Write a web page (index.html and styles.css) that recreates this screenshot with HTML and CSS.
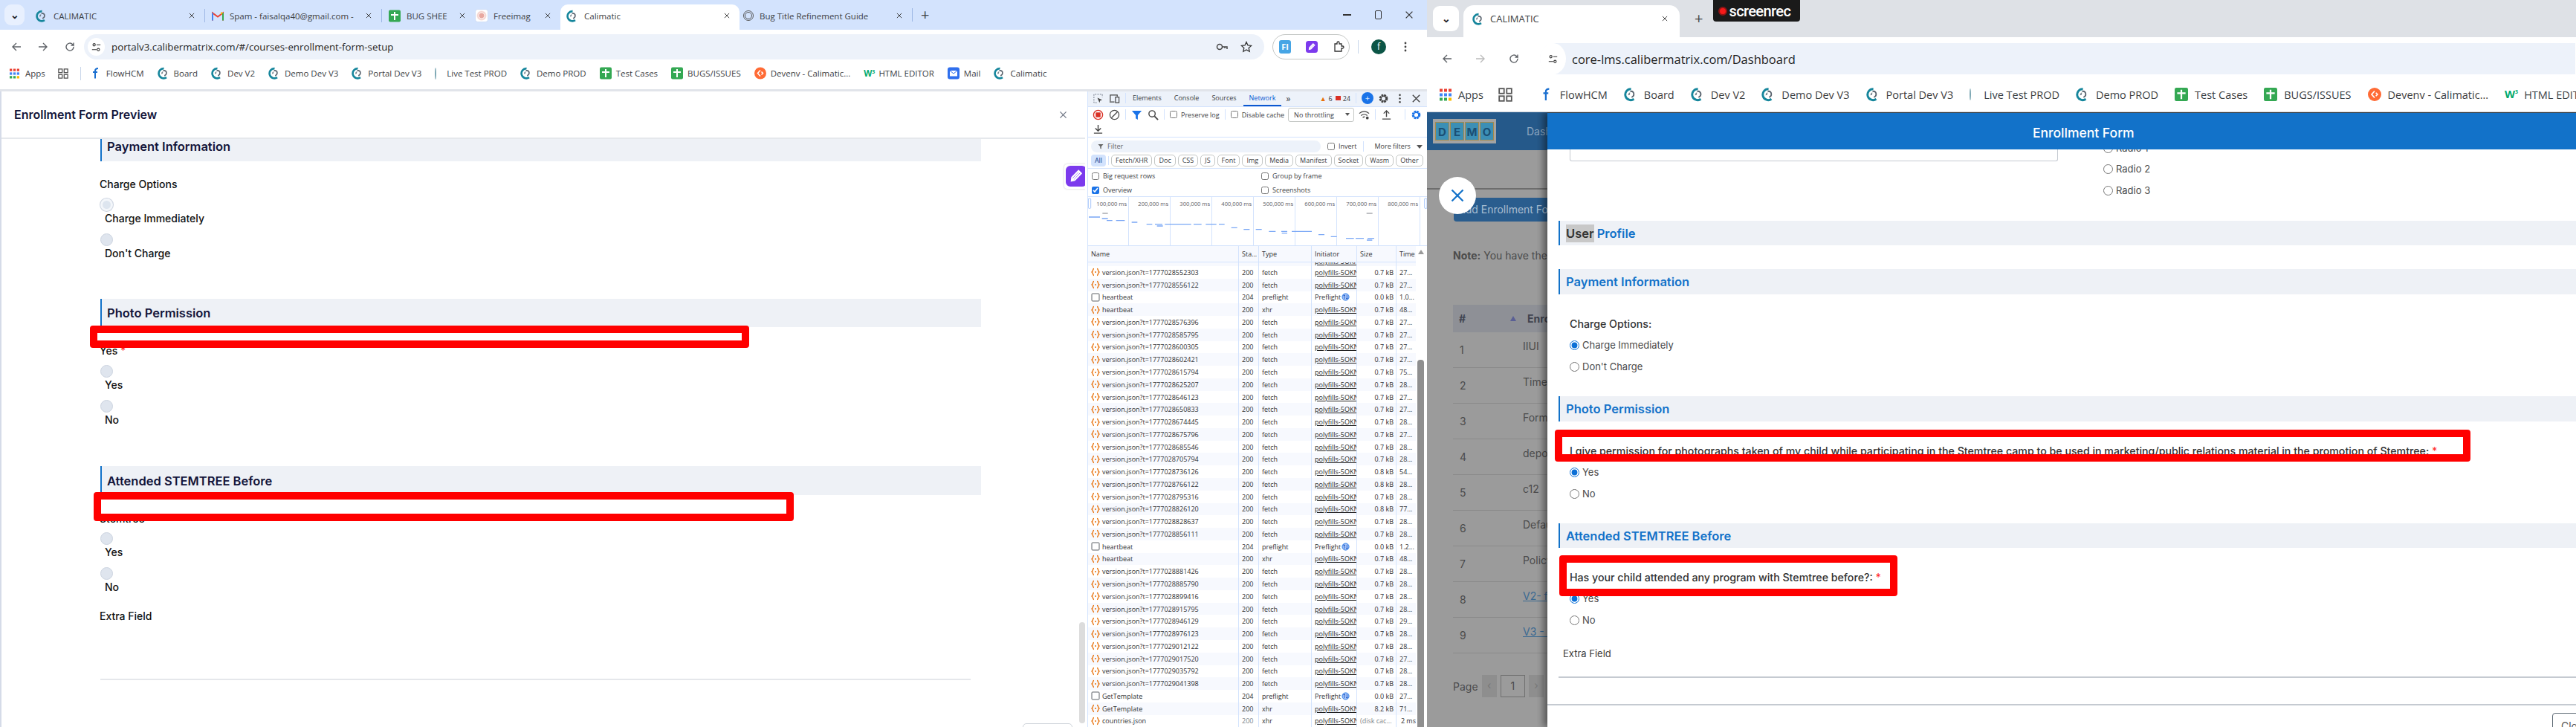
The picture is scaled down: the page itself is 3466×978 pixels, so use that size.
FILE: index.html
```html
<!DOCTYPE html>
<html lang="en">
<head>
    <meta charset="utf-8">
    <title>Enrollment form bug</title>
    <link rel="stylesheet" href="styles.css">
</head>
<body>
<svg class="defs" width="0" height="0">
    <symbol id="cal" viewBox="0 0 16 16"><path d="M8.5 1.6A6.6 6.6 0 1 0 12 13.6" fill="none" stroke="#16869c" stroke-width="2.6"/><path d="M7.6 4.4c2.8-.6 4.8 1.4 4.2 4.2-.3 1.4-1.3 2.4-2.6 2.8" fill="none" stroke="#59636e" stroke-width="1.7"/><path d="M5 9c0-2 1-3 2.4-3.4L7 8.6z" fill="#7b8791"/></symbol>
    <symbol id="sheet" viewBox="0 0 16 16"><rect width="16" height="16" rx="2" fill="#34a853"/><path d="M8 2.5v11M3 6.5h10" stroke="#fff" stroke-width="2"/></symbol>
    <symbol id="gmail" viewBox="0 0 16 14"><path d="M1 13V3l7 5 7-5v10" fill="none" stroke="#ea4335" stroke-width="2"/><path d="M1 13V3" stroke="#4285f4" stroke-width="2"/><path d="M15 13V3" stroke="#34a853" stroke-width="2"/><path d="M15 3l-3 2.2V1.6z" fill="#fbbc04"/></symbol>
    <symbol id="back" viewBox="0 0 16 16"><path d="M14 8H3M8 3L3 8l5 5" fill="none" stroke="currentColor" stroke-width="1.4"/></symbol>
    <symbol id="fwd" viewBox="0 0 16 16"><path d="M2 8h11M8 3l5 5-5 5" fill="none" stroke="currentColor" stroke-width="1.4"/></symbol>
    <symbol id="reload" viewBox="0 0 16 16"><path d="M13 8a5 5 0 1 1-1.5-3.5L13 6V2.5M13 6H9.5" fill="none" stroke="currentColor" stroke-width="1.4"/></symbol>
    <symbol id="tune" viewBox="0 0 16 16"><circle cx="4.5" cy="4" r="2" fill="none" stroke="#333" stroke-width="1.3"/><circle cx="11.5" cy="12" r="2" fill="none" stroke="#333" stroke-width="1.3"/><path d="M8.5 4H15M1 12h7.500" stroke="#333" stroke-width="1.3"/></symbol>
    <symbol id="close" viewBox="0 0 16 16"><path d="M3 3l10 10M13 3L3 13" fill="none" stroke="currentColor" stroke-width="1.5"/></symbol>
    <symbol id="grid" viewBox="0 0 16 16"><g fill="#ea4335"><rect width="4" height="4"/><rect x="6" width="4" height="4"/><rect x="12" width="4" height="4"/></g><g fill="#4285f4"><rect y="6" width="4" height="4"/><rect x="6" y="6" width="4" height="4"/><rect x="12" y="6" width="4" height="4"/></g><g fill="#34a853"><rect y="12" width="4" height="4"/><rect x="6" y="12" width="4" height="4"/></g><rect x="12" y="12" width="4" height="4" fill="#fbbc04"/></symbol>
    <symbol id="tabs" viewBox="0 0 16 16"><g fill="none" stroke="#555" stroke-width="1.5"><rect x="1" y="1" width="5.5" height="5.5"/><rect x="9.5" y="1" width="5.5" height="5.5"/><rect x="1" y="9.5" width="5.5" height="5.5"/><rect x="9.5" y="9.5" width="5.5" height="5.5"/></g></symbol>
    <symbol id="flow" viewBox="0 0 16 16"><path d="M11 1.5C8 1.500 7 3 7 5v10M4 6.5h6" fill="none" stroke="#1a6fd0" stroke-width="2"/></symbol>
    <symbol id="deven" viewBox="0 0 16 16"><circle cx="8" cy="8" r="8" fill="#ff6b35"/><path d="M8 4L4.5 8 8 12M9.500 6l2 2-2 2" fill="none" stroke="#fff" stroke-width="1.5"/></symbol>
    <symbol id="mail" viewBox="0 0 16 16"><rect width="16" height="16" rx="3" fill="#2f6fed"/><rect x="3" y="4.5" width="10" height="7.5" fill="#fff"/><path d="M3 4.5l5 4 5-4" fill="none" stroke="#2f6fed"/></symbol>
    <symbol id="pen" viewBox="0 0 16 16"><rect width="16" height="16" rx="3.5" fill="#7c3aed"/><path d="M4.5 11.5L11 4.500M4.500 11.500l.3-2.500 5-5.200 2 2-5 5.200z" fill="none" stroke="#fff" stroke-width="1.2"/></symbol>
    <symbol id="puzzle" viewBox="0 0 16 16"><path d="M3 4h3V2.500a1.500 1.500 0 0 1 3 0V4h3v3h1.500a1.500 1.500 0 0 1 0 3H12v4H3z" fill="none" stroke="#333" stroke-width="1.3"/></symbol>
    <symbol id="key" viewBox="0 0 16 16"><circle cx="5" cy="8" r="3.5" fill="none" stroke="#444" stroke-width="1.5"/><path d="M8.5 8H15v3M12 8v2" fill="none" stroke="#444" stroke-width="1.5"/></symbol>
    <symbol id="star" viewBox="0 0 16 16"><path d="M8 1.500l2 4.400 4.700.5-3.500 3.200 1 4.700L8 11.900l-4.200 2.400 1-4.700L1.300 6.400 6 5.900z" fill="none" stroke="#333" stroke-width="1.3"/></symbol>
    <symbol id="json" viewBox="0 0 12 12"><path d="M4 1.500C2 1.500 3 5 1 6c2 1 1 4.500 3 4.500M8 1.500c2 0 1 3.500 3 4.500-2 1-1 4.500-3 4.500" fill="none" stroke="#e8710a" stroke-width="1.3"/><circle cx="6" cy="6" r="1" fill="#e8710a"/></symbol>
    <symbol id="box" viewBox="0 0 12 12"><rect x="1" y="1" width="10" height="10" rx="1" fill="none" stroke="#5f6368" stroke-width="1"/></symbol>
    <symbol id="flight" viewBox="0 0 12 12"><circle cx="6" cy="6" r="5" fill="#a8c7fa" stroke="#1a73e8"/><path d="M4 9V3M2.500 4.500L4 3l1.500 1.500M8 3v6M6.500 7.500L8 9l1.500-1.500" fill="none" stroke="#1a56c4"/></symbol>
    <symbol id="inspect" viewBox="0 0 16 16"><path d="M6 14H2V2h12v4" fill="none" stroke="#6b7280" stroke-dasharray="2 1.5"/><path d="M7 7l7 3-3 1-1 3z" fill="#444"/></symbol>
    <symbol id="device" viewBox="0 0 16 16"><path d="M2 12V3h10v2M1 13h7" fill="none" stroke="#444" stroke-width="1.3"/><rect x="9.5" y="6" width="5" height="8" fill="none" stroke="#444" stroke-width="1.3"/></symbol>
    <symbol id="gear" viewBox="0 0 16 16"><circle cx="8" cy="8" r="4.8" fill="none" stroke="currentColor" stroke-width="2.8" stroke-dasharray="2.8 1"/><circle cx="8" cy="8" r="3.5" fill="none" stroke="currentColor" stroke-width="1.4"/></symbol>
    <symbol id="dots" viewBox="0 0 16 16"><g fill="currentColor"><circle cx="8" cy="3" r="1.4"/><circle cx="8" cy="8" r="1.4"/><circle cx="8" cy="13" r="1.4"/></g></symbol>
    <symbol id="record" viewBox="0 0 16 16"><circle cx="8" cy="8" r="6.5" fill="none" stroke="#d93025" stroke-width="1.5"/><rect x="4.5" y="4.5" width="7" height="7" rx="1" fill="#d93025"/></symbol>
    <symbol id="clear" viewBox="0 0 16 16"><circle cx="8" cy="8" r="6.5" fill="none" stroke="#444" stroke-width="1.3"/><path d="M3.500 12.500l9-9" stroke="#444" stroke-width="1.3"/></symbol>
    <symbol id="funnel" viewBox="0 0 16 16"><path d="M1 2h14L9.500 8.500V15l-3-2V8.500z" fill="currentColor"/></symbol>
    <symbol id="search" viewBox="0 0 16 16"><circle cx="6.5" cy="6.5" r="4.5" fill="none" stroke="#444" stroke-width="1.5"/><path d="M10 10l5 5" stroke="#444" stroke-width="2"/></symbol>
    <symbol id="wifi" viewBox="0 0 16 16"><path d="M1 6a10 10 0 0 1 14 0M3.500 9a6.500 6.500 0 0 1 9 0M6 12a3 3 0 0 1 3-1" fill="none" stroke="#444" stroke-width="1.3"/><circle cx="12.5" cy="12.5" r="2" fill="#444"/></symbol>
    <symbol id="up" viewBox="0 0 16 16"><path d="M8 11V2M4 6l4-4 4 4M2 14h12" fill="none" stroke="#444" stroke-width="1.5"/></symbol>
    <symbol id="down" viewBox="0 0 16 16"><path d="M8 2v9M4 7l4 4 4-4M2 14h12" fill="none" stroke="#444" stroke-width="1.5"/></symbol>
</svg>

<div class="desktop">

<!-- left browser window -->
<section class="win win-a">
    <div class="strip">
        <div class="tab-menu">&#8964;</div>
        <div class="tab w-cal"><svg class="fav"><use href="#cal"/></svg><span class="tab-title">CALIMATIC</span><svg class="tab-x"><use href="#close"/></svg></div>
        <div class="tab w-mail sep-l"><svg class="fav"><use href="#gmail"/></svg><span class="tab-title">Spam - faisalqa40@gmail.com -</span><svg class="tab-x"><use href="#close"/></svg></div>
        <div class="tab w-bug sep-l"><svg class="fav"><use href="#sheet"/></svg><span class="tab-title">BUG SHEE</span><svg class="tab-x"><use href="#close"/></svg></div>
        <div class="tab w-free"><span class="fav-free"></span><span class="tab-title">Freeimag</span><svg class="tab-x"><use href="#close"/></svg></div>
        <div class="tab w-active"><svg class="fav"><use href="#cal"/></svg><span class="tab-title">Calimatic</span><svg class="tab-x"><use href="#close"/></svg></div>
        <div class="tab w-guide"><span class="fav-gpt"></span><span class="tab-title">Bug Title Refinement Guide</span><svg class="tab-x"><use href="#close"/></svg></div>
        <span class="tab-sep"></span>
        <span class="tab-plus">+</span>
        <div class="win-ctrl">
            <span class="min"></span>
            <span class="max"></span>
            <svg class="win-x"><use href="#close"/></svg>
        </div>
    </div>
    <div class="toolbar">
        <svg class="nav-ic"><use href="#back"/></svg>
        <svg class="nav-ic"><use href="#fwd"/></svg>
        <svg class="nav-ic"><use href="#reload"/></svg>
        <div class="omni">
            <span class="site"><svg><use href="#tune"/></svg></span>
            <span class="url">portalv3.calibermatrix.com/#/courses-enrollment-form-setup</span>
            <svg class="omni-ic key"><use href="#key"/></svg>
            <svg class="omni-ic"><use href="#star"/></svg>
        </div>
        <div class="ext-pill">
            <span class="ext-fi">FI</span>
            <svg class="ext"><use href="#pen"/></svg>
            <svg class="ext"><use href="#puzzle"/></svg>
        </div>
        <span class="bar-sep"></span>
        <span class="avatar">f</span>
        <svg class="menu-dots"><use href="#dots"/></svg>
    </div>
    <div class="bookmarks">
        <a class="bm bm-apps"><svg class="grid"><use href="#grid"/></svg>Apps</a>
        <svg class="bm-tabs"><use href="#tabs"/></svg>
        <span class="bm-sep"></span>
        <a class="bm bm-flow"><svg><use href="#flow"/></svg>FlowHCM</a>
        <a class="bm"><svg><use href="#cal"/></svg>Board</a>
        <a class="bm"><svg><use href="#cal"/></svg>Dev V2</a>
        <a class="bm"><svg><use href="#cal"/></svg>Demo Dev V3</a>
        <a class="bm"><svg><use href="#cal"/></svg>Portal Dev V3</a>
        <a class="bm"><span class="sliver"></span>Live Test PROD</a>
        <a class="bm"><svg><use href="#cal"/></svg>Demo PROD</a>
        <a class="bm"><svg><use href="#sheet"/></svg>Test Cases</a>
        <a class="bm"><svg><use href="#sheet"/></svg>BUGS/ISSUES</a>
        <a class="bm"><svg><use href="#deven"/></svg>Devenv - Calimatic...</a>
        <a class="bm"><span class="w3">W<sup>3</sup></span>HTML EDITOR</a>
        <a class="bm"><svg><use href="#mail"/></svg>Mail</a>
        <a class="bm"><svg><use href="#cal"/></svg>Calimatic</a>
    </div>

    <div class="split">
        <div class="preview">
            <header class="preview-head">
                <h2>Enrollment Form Preview</h2>
                <svg class="preview-x"><use href="#close"/></svg>
            </header>
            <div class="preview-body">
                <div class="sec-a sec-first"><h3>Payment Information</h3></div>
                <p class="lbl lbl-charge">Charge Options</p>
                <span class="rd rd-on"></span>
                <label class="opt">Charge Immediately</label>
                <span class="rd rd-next"></span>
                <label class="opt">Don't Charge</label>

                <div class="sec-a sec-photo"><h3>Photo Permission</h3></div>
                <div class="q q-yes">
                    <p class="lbl">Yes <i>*</i></p>
                    <span class="cover cover-a"></span>
                </div>
                <span class="rd rd-q"></span>
                <label class="opt">Yes</label>
                <span class="rd rd-alt"></span>
                <label class="opt">No</label>

                <div class="sec-a sec-attended"><h3>Attended STEMTREE Before</h3></div>
                <div class="q q-stem">
                    <p class="lbl">Stemtree</p>
                    <span class="cover cover-b"></span>
                </div>
                <span class="rd rd-q2"></span>
                <label class="opt">Yes</label>
                <span class="rd rd-alt"></span>
                <label class="opt">No</label>
                <p class="lbl lbl-extra">Extra Field</p>
                <hr class="rule-a">
            </div>
            <div class="bubble"><svg><use href="#pen"/></svg></div>
            <div class="page-scroll"></div>
            <div class="peek-btn"></div>
        </div>

        <aside class="devtools">
            <div class="dt-tabs">
                <svg class="dt-ic"><use href="#inspect"/></svg>
                <svg class="dt-ic"><use href="#device"/></svg>
                <span class="dt-sep"></span>
                <span class="dt-tab">Elements</span>
                <span class="dt-tab">Console</span>
                <span class="dt-tab">Sources</span>
                <span class="dt-tab dt-on">Network</span>
                <span class="dt-more">&raquo;</span>
                <span class="warn">&#9650;</span><span class="count">6</span>
                <span class="err"></span><span class="count">24</span>
                <span class="dt-sep"></span>
                <span class="ai">+</span>
                <svg class="dt-ic gear"><use href="#gear"/></svg>
                <svg class="dt-ic"><use href="#dots"/></svg>
                <svg class="dt-ic"><use href="#close"/></svg>
            </div>
            <div class="dt-actions">
                <div class="dt-line">
                    <svg class="dt-ic"><use href="#record"/></svg>
                    <svg class="dt-ic"><use href="#clear"/></svg>
                    <span class="dt-sep"></span>
                    <svg class="dt-ic blue"><use href="#funnel"/></svg>
                    <svg class="dt-ic"><use href="#search"/></svg>
                    <span class="dt-sep"></span>
                    <label class="chk"><input type="checkbox">Preserve log</label>
                    <span class="dt-sep"></span>
                    <label class="chk"><input type="checkbox">Disable cache</label>
                    <div class="throttle">No throttling<b></b></div>
                    <svg class="dt-ic"><use href="#wifi"/></svg>
                    <span class="dt-sep"></span>
                    <svg class="dt-ic"><use href="#up"/></svg>
                    <span class="dt-sep push"></span>
                    <svg class="dt-ic blue"><use href="#gear"/></svg>
                </div>
                <svg class="dt-ic dl"><use href="#down"/></svg>
            </div>
            <div class="dt-filter">
                <div class="filter-line">
                    <div class="filter-box"><svg><use href="#funnel"/></svg>Filter</div>
                    <label class="chk"><input type="checkbox">Invert</label>
                    <span class="dt-sep"></span>
                    <span class="more-f">More filters <b></b></span>
                </div>
                <div class="chips">
                    <span class="chip-all">All</span><span class="chip-sep"></span>
                    <span class="chip">Fetch/XHR</span><span class="chip">Doc</span><span class="chip">CSS</span><span class="chip">JS</span><span class="chip">Font</span><span class="chip">Img</span><span class="chip">Media</span><span class="chip">Manifest</span><span class="chip">Socket</span><span class="chip">Wasm</span><span class="chip">Other</span>
                </div>
            </div>
            <div class="dt-opts">
                <label class="chk"><input type="checkbox">Big request rows</label>
                <label class="chk"><input type="checkbox">Group by frame</label>
                <label class="chk"><input type="checkbox" checked>Overview</label>
                <label class="chk"><input type="checkbox">Screenshots</label>
            </div>
            <div class="overview">
                <div class="ticks">
                    <span>100,000 ms</span><span>200,000 ms</span><span>300,000 ms</span><span>400,000 ms</span><span>500,000 ms</span><span>600,000 ms</span><span>700,000 ms</span><span>800,000 ms</span>
                </div>
                <svg class="dashes" viewBox="0 0 1368 198">
                    <path stroke="#7aa7f5" stroke-width="4" d="M3 81h45M56 87h24M75 95h23M113 95h35M176 102h23M236 110h23M270 110h30M310 110h106M426 110h32M475 110h43M528 110h23M278 117h24M578 124h24M628 131h24M677 131h24M730 139h27M780 139h24M822 139h81M782 146h22M930 152h24M980 160h24M1041 167h32M1080 167h33M1128 167h27M1125 174h22"/>
                    <path stroke="#a9abb0" stroke-width="4" d="M58 66h22M1124 66h24"/>
                    <g fill="#fff" stroke="#a8c7fa" stroke-width="3"><rect x="1" y="6" width="10" height="40" rx="3"/><rect x="1358" y="6" width="10" height="40" rx="3"/></g>
                </svg>
            </div>
            <div class="net">
                <div class="net-main">
                    <div class="net-row net-head"><span>Name</span><span>Sta...</span><span>Type</span><span>Initiator</span><span>Size</span><span>Time</span></div>
                    <div class="net-body">
                        <div class="net-row net-cut"><span></span><span></span><span></span><span><u>polyfills-5OKN</u></span><span></span><span></span></div>
                        <div class="net-row"><span><svg><use href="#json"/></svg>version.json?t=1777028552303</span><span>200</span><span>fetch</span><span><u>polyfills-5OKN</u></span><span class="num">0.7 kB</span><span>27...</span></div>
                        <div class="net-row"><span><svg><use href="#json"/></svg>version.json?t=1777028556122</span><span>200</span><span>fetch</span><span><u>polyfills-5OKN</u></span><span class="num">0.7 kB</span><span>27...</span></div>
                        <div class="net-row"><span><svg><use href="#box"/></svg>heartbeat</span><span>204</span><span>preflight</span><span>Preflight<svg class="pf"><use href="#flight"/></svg></span><span class="num">0.0 kB</span><span>1.0...</span></div>
                        <div class="net-row"><span><svg><use href="#json"/></svg>heartbeat</span><span>200</span><span>xhr</span><span><u>polyfills-5OKN</u></span><span class="num">0.7 kB</span><span>48...</span></div>
                        <div class="net-row"><span><svg><use href="#json"/></svg>version.json?t=1777028576396</span><span>200</span><span>fetch</span><span><u>polyfills-5OKN</u></span><span class="num">0.7 kB</span><span>27...</span></div>
                        <div class="net-row"><span><svg><use href="#json"/></svg>version.json?t=1777028585795</span><span>200</span><span>fetch</span><span><u>polyfills-5OKN</u></span><span class="num">0.7 kB</span><span>27...</span></div>
                        <div class="net-row"><span><svg><use href="#json"/></svg>version.json?t=1777028600305</span><span>200</span><span>fetch</span><span><u>polyfills-5OKN</u></span><span class="num">0.7 kB</span><span>27...</span></div>
                        <div class="net-row"><span><svg><use href="#json"/></svg>version.json?t=1777028602421</span><span>200</span><span>fetch</span><span><u>polyfills-5OKN</u></span><span class="num">0.7 kB</span><span>27...</span></div>
                        <div class="net-row"><span><svg><use href="#json"/></svg>version.json?t=1777028615794</span><span>200</span><span>fetch</span><span><u>polyfills-5OKN</u></span><span class="num">0.7 kB</span><span>75...</span></div>
                        <div class="net-row"><span><svg><use href="#json"/></svg>version.json?t=1777028625207</span><span>200</span><span>fetch</span><span><u>polyfills-5OKN</u></span><span class="num">0.7 kB</span><span>28...</span></div>
                        <div class="net-row"><span><svg><use href="#json"/></svg>version.json?t=1777028646123</span><span>200</span><span>fetch</span><span><u>polyfills-5OKN</u></span><span class="num">0.7 kB</span><span>27...</span></div>
                        <div class="net-row"><span><svg><use href="#json"/></svg>version.json?t=1777028650833</span><span>200</span><span>fetch</span><span><u>polyfills-5OKN</u></span><span class="num">0.7 kB</span><span>27...</span></div>
                        <div class="net-row"><span><svg><use href="#json"/></svg>version.json?t=1777028674445</span><span>200</span><span>fetch</span><span><u>polyfills-5OKN</u></span><span class="num">0.7 kB</span><span>28...</span></div>
                        <div class="net-row"><span><svg><use href="#json"/></svg>version.json?t=1777028675796</span><span>200</span><span>fetch</span><span><u>polyfills-5OKN</u></span><span class="num">0.7 kB</span><span>27...</span></div>
                        <div class="net-row"><span><svg><use href="#json"/></svg>version.json?t=1777028685546</span><span>200</span><span>fetch</span><span><u>polyfills-5OKN</u></span><span class="num">0.7 kB</span><span>28...</span></div>
                        <div class="net-row"><span><svg><use href="#json"/></svg>version.json?t=1777028705794</span><span>200</span><span>fetch</span><span><u>polyfills-5OKN</u></span><span class="num">0.7 kB</span><span>28...</span></div>
                        <div class="net-row"><span><svg><use href="#json"/></svg>version.json?t=1777028736126</span><span>200</span><span>fetch</span><span><u>polyfills-5OKN</u></span><span class="num">0.8 kB</span><span>54...</span></div>
                        <div class="net-row"><span><svg><use href="#json"/></svg>version.json?t=1777028766122</span><span>200</span><span>fetch</span><span><u>polyfills-5OKN</u></span><span class="num">0.8 kB</span><span>28...</span></div>
                        <div class="net-row"><span><svg><use href="#json"/></svg>version.json?t=1777028795316</span><span>200</span><span>fetch</span><span><u>polyfills-5OKN</u></span><span class="num">0.7 kB</span><span>28...</span></div>
                        <div class="net-row"><span><svg><use href="#json"/></svg>version.json?t=1777028826120</span><span>200</span><span>fetch</span><span><u>polyfills-5OKN</u></span><span class="num">0.8 kB</span><span>77...</span></div>
                        <div class="net-row"><span><svg><use href="#json"/></svg>version.json?t=1777028828637</span><span>200</span><span>fetch</span><span><u>polyfills-5OKN</u></span><span class="num">0.7 kB</span><span>28...</span></div>
                        <div class="net-row"><span><svg><use href="#json"/></svg>version.json?t=1777028856111</span><span>200</span><span>fetch</span><span><u>polyfills-5OKN</u></span><span class="num">0.7 kB</span><span>28...</span></div>
                        <div class="net-row"><span><svg><use href="#box"/></svg>heartbeat</span><span>204</span><span>preflight</span><span>Preflight<svg class="pf"><use href="#flight"/></svg></span><span class="num">0.0 kB</span><span>1.2...</span></div>
                        <div class="net-row"><span><svg><use href="#json"/></svg>heartbeat</span><span>200</span><span>xhr</span><span><u>polyfills-5OKN</u></span><span class="num">0.7 kB</span><span>48...</span></div>
                        <div class="net-row"><span><svg><use href="#json"/></svg>version.json?t=1777028881426</span><span>200</span><span>fetch</span><span><u>polyfills-5OKN</u></span><span class="num">0.7 kB</span><span>28...</span></div>
                        <div class="net-row"><span><svg><use href="#json"/></svg>version.json?t=1777028885790</span><span>200</span><span>fetch</span><span><u>polyfills-5OKN</u></span><span class="num">0.7 kB</span><span>28...</span></div>
                        <div class="net-row"><span><svg><use href="#json"/></svg>version.json?t=1777028899416</span><span>200</span><span>fetch</span><span><u>polyfills-5OKN</u></span><span class="num">0.7 kB</span><span>28...</span></div>
                        <div class="net-row"><span><svg><use href="#json"/></svg>version.json?t=1777028915795</span><span>200</span><span>fetch</span><span><u>polyfills-5OKN</u></span><span class="num">0.7 kB</span><span>28...</span></div>
                        <div class="net-row"><span><svg><use href="#json"/></svg>version.json?t=1777028946129</span><span>200</span><span>fetch</span><span><u>polyfills-5OKN</u></span><span class="num">0.7 kB</span><span>29...</span></div>
                        <div class="net-row"><span><svg><use href="#json"/></svg>version.json?t=1777028976123</span><span>200</span><span>fetch</span><span><u>polyfills-5OKN</u></span><span class="num">0.7 kB</span><span>28...</span></div>
                        <div class="net-row"><span><svg><use href="#json"/></svg>version.json?t=1777029012122</span><span>200</span><span>fetch</span><span><u>polyfills-5OKN</u></span><span class="num">0.7 kB</span><span>28...</span></div>
                        <div class="net-row"><span><svg><use href="#json"/></svg>version.json?t=1777029017520</span><span>200</span><span>fetch</span><span><u>polyfills-5OKN</u></span><span class="num">0.7 kB</span><span>27...</span></div>
                        <div class="net-row"><span><svg><use href="#json"/></svg>version.json?t=1777029035792</span><span>200</span><span>fetch</span><span><u>polyfills-5OKN</u></span><span class="num">0.7 kB</span><span>28...</span></div>
                        <div class="net-row"><span><svg><use href="#json"/></svg>version.json?t=1777029041398</span><span>200</span><span>fetch</span><span><u>polyfills-5OKN</u></span><span class="num">0.7 kB</span><span>28...</span></div>
                        <div class="net-row"><span><svg><use href="#box"/></svg>GetTemplate</span><span>204</span><span>preflight</span><span>Preflight<svg class="pf"><use href="#flight"/></svg></span><span class="num">0.0 kB</span><span>27...</span></div>
                        <div class="net-row"><span><svg><use href="#json"/></svg>GetTemplate</span><span>200</span><span>xhr</span><span><u>polyfills-5OKN</u></span><span class="num">8.2 kB</span><span>71...</span></div>
                        <div class="net-row"><span><svg><use href="#json"/></svg>countries.json</span><span class="dim">200</span><span>xhr</span><span><u>polyfills-5OKN</u></span><span class="dim">(disk cac...</span><span class="num">2 ms</span></div>
                    </div>
                </div>
                <div class="net-scroll"><span class="sort-up"></span><span class="net-thumb"></span></div>
            </div>
        </aside>
    </div>
</section>

<!-- right browser window -->
<section class="win win-b">
    <div class="strip">
        <div class="tab-menu">&#8964;</div>
        <div class="tab w-active"><svg class="fav"><use href="#cal"/></svg><span class="tab-title">CALIMATIC</span><svg class="tab-x"><use href="#close"/></svg></div>
        <span class="tab-plus">+</span>
        <div class="screenrec"><span class="rec-dot"></span>screenrec</div>
    </div>
    <div class="toolbar">
        <svg class="nav-ic"><use href="#back"/></svg>
        <svg class="nav-ic off"><use href="#fwd"/></svg>
        <svg class="nav-ic"><use href="#reload"/></svg>
        <div class="omni">
            <span class="site"><svg><use href="#tune"/></svg></span>
            <span class="url">core-lms.calibermatrix.com/Dashboard</span>
        </div>
    </div>
    <div class="bookmarks">
        <a class="bm bm-apps"><svg class="grid"><use href="#grid"/></svg>Apps</a>
        <svg class="bm-tabs"><use href="#tabs"/></svg>
        <span class="bm-sep"></span>
        <a class="bm bm-flow"><svg><use href="#flow"/></svg>FlowHCM</a>
        <a class="bm"><svg><use href="#cal"/></svg>Board</a>
        <a class="bm"><svg><use href="#cal"/></svg>Dev V2</a>
        <a class="bm"><svg><use href="#cal"/></svg>Demo Dev V3</a>
        <a class="bm"><svg><use href="#cal"/></svg>Portal Dev V3</a>
        <a class="bm"><span class="sliver"></span>Live Test PROD</a>
        <a class="bm"><svg><use href="#cal"/></svg>Demo PROD</a>
        <a class="bm"><svg><use href="#sheet"/></svg>Test Cases</a>
        <a class="bm"><svg><use href="#sheet"/></svg>BUGS/ISSUES</a>
        <a class="bm"><svg><use href="#deven"/></svg>Devenv - Calimatic...</a>
        <a class="bm"><span class="w3">W<sup>3</sup></span>HTML EDITOR</a>
    </div>

    <div class="lms">
        <div class="behind">
            <div class="lms-nav">
                <div class="logo"><span>D</span><span>E</span><span>M</span><span>O</span></div>
                <span class="nav-link">Dashboard</span>
            </div>
            <div class="page-rule"></div>
            <div class="add-btn">Add Enrollment Form</div>
            <p class="note"><b>Note:</b> You have the option</p>
            <div class="tbl">
                <div class="tbl-head"><b>#</b><i></i><b>Enrollment</b></div>
                <div class="tbl-row"><span>1</span><em>IIUI</em></div>
                <div class="tbl-row"><span>2</span><em>Timeline</em></div>
                <div class="tbl-row"><span>3</span><em>Form</em></div>
                <div class="tbl-row"><span>4</span><em>deposit</em></div>
                <div class="tbl-row"><span>5</span><em>c12</em></div>
                <div class="tbl-row"><span>6</span><em>Default</em></div>
                <div class="tbl-row"><span>7</span><em>Policy</em></div>
                <div class="tbl-row"><span>8</span><em><u>V2- form</u></em></div>
                <div class="tbl-row"><span>9</span><em><u>V3 - form</u></em></div>
            </div>
            <div class="pager"><span>Page</span><b>&lsaquo;</b><strong>1</strong><b>&rsaquo;</b></div>
        </div>

        <div class="close-circle"><svg><use href="#close"/></svg></div>

        <div class="form-modal">
            <header class="form-head">Enrollment Form</header>
            <div class="form-body">
                <div class="form-top">
                    <div class="text-area"></div>
                    <div class="radios">
                        <label class="opt-b"><input type="radio">Radio 1</label>
                        <label class="opt-b"><input type="radio">Radio 2</label>
                        <label class="opt-b"><input type="radio">Radio 3</label>
                    </div>
                </div>
                <div class="sec-b sec-user"><h3><mark>User</mark> Profile</h3></div>
                <div class="sec-b sec-pay"><h3>Payment Information</h3></div>
                <p class="q-b q-charge">Charge Options:</p>
                <label class="opt-b opt-gap"><input type="radio" name="charge" checked>Charge Immediately</label>
                <label class="opt-b"><input type="radio" name="charge">Don't Charge</label>
                <div class="sec-b sec-ph"><h3>Photo Permission</h3></div>
                <div class="q-wrap q-give">
                    <p class="q-b">I give permission for photographs taken of my child while participating in the Stemtree camp to be used in marketing/public relations material in the promotion of Stemtree: <i>*</i></p>
                    <span class="ring ring-a"></span>
                </div>
                <label class="opt-b"><input type="radio" name="photo" checked>Yes</label>
                <label class="opt-b"><input type="radio" name="photo">No</label>
                <div class="sec-b sec-att"><h3>Attended STEMTREE Before</h3></div>
                <div class="q-wrap q-has">
                    <p class="q-b">Has your child attended any program with Stemtree before?: <i>*</i></p>
                    <span class="ring ring-b"></span>
                </div>
                <label class="opt-b"><input type="radio" name="before" checked>Yes</label>
                <label class="opt-b"><input type="radio" name="before">No</label>
                <p class="extra">Extra Field</p>
                <hr class="rule-b">
            </div>
            <footer class="form-foot"><span class="close-btn">Close</span></footer>
        </div>
    </div>
</section>

</div>
</body>
</html>
```

FILE: styles.css
```css
* {
    box-sizing: border-box;
}

html, body {
    margin: 0;
    height: 100%;
    overflow: hidden;
    background: #fff;
}

p, h2, h3 {
    margin: 0;
}

svg {
    display: block;
    flex: none;
}

.defs {
    position: absolute;
}

.desktop {
    display: grid;
    grid-template-columns: 1920px 1546px;
    height: 978px;
    font-family: "Open Sans", "Noto Sans", sans-serif;
    color: #202124;
}

.win {
    display: flex;
    flex-direction: column;
    height: 978px;
    overflow: hidden;
}

/* tab strip */
.strip {
    display: flex;
    align-items: flex-end;
    flex: none;
}
.win-a .strip {
    height: 40px;
    background: #d3e3fd;
    padding-left: 6px;
    font-size: 11.5px;
}
.win-b .strip {
    height: 50px;
    background: #dee1e6;
    padding-left: 8px;
    font-size: 13px;
}
.tab-menu {
    display: flex;
    align-items: center;
    justify-content: center;
    align-self: flex-start;
    font-size: 14px;
    font-weight: 700;
    line-height: 1;
    border-radius: 9px;
}
.win-a .tab-menu {
    width: 27px;
    height: 28px;
    margin: 6px 7px 0 0;
    background: #e8f0fe;
}
.win-b .tab-menu {
    width: 35px;
    height: 34px;
    margin: 8px 6px 0 0;
    background: #fff;
}
.tab {
    display: flex;
    align-items: center;
    gap: 8px;
    height: 34px;
    padding: 0 12px 4px 8px;
    flex: none;
    position: relative;
    color: #3c4043;
}
.tab-title {
    flex: 1;
    overflow: hidden;
    white-space: nowrap;
}
.fav {
    width: 16px;
    height: 17px;
}
.fav-free {
    width: 16px;
    height: 16px;
    flex: none;
    border-radius: 3px;
    background: radial-gradient(circle, #e8a8a0 0 3px, #fff 4px, #f3c7c0 5px, #fff 7px);
    box-shadow: 0 0 1px #bbb;
}
.fav-gpt {
    width: 14px;
    height: 14px;
    flex: none;
    margin-left: 1px;
    border-radius: 50%;
    border: 3px double #555;
}
.tab-x {
    width: 10px;
    height: 10px;
    color: #333;
}
.w-cal { width: 235px; }
.w-mail { width: 238px; padding-left: 10px; }
.w-bug { width: 126px; padding-left: 10px; }
.w-free { width: 115px; padding-left: 1px; }
.w-guide { width: 232px; padding-left: 4px; }
.win-a .w-active {
    width: 241px;
    border-radius: 10px 10px 0 0;
    background: #fff;
}
.win-b .w-active {
    width: 291px;
    height: 43px;
    padding: 0 15px 7px 12px;
    border-radius: 14px 14px 0 0;
    background: #fff;
}
.sep-l::before {
    content: "";
    position: absolute;
    left: 0;
    top: 6px;
    width: 1px;
    height: 18px;
    background: #9db7e4;
}
.tab-sep {
    width: 1px;
    height: 18px;
    margin-bottom: 11px;
    background: #9db7e4;
}
.tab-plus {
    font-size: 20px;
    line-height: 40px;
    margin-left: 11px;
    color: #444;
}
.win-b .tab-plus {
    margin-left: 20px;
    line-height: 50px;
}
.win-ctrl {
    display: flex;
    align-items: center;
    height: 40px;
    margin-left: auto;
    gap: 28px;
    padding-right: 17px;
}
.min {
    width: 11px;
    height: 1.5px;
    background: #333;
}
.max {
    width: 9px;
    height: 12px;
    border: 1.5px solid #333;
    border-radius: 2px;
    margin-left: 4px;
}
.win-x {
    width: 14px;
    height: 14px;
    color: #333;
    margin-left: 2px;
}
.screenrec {
    display: flex;
    align-items: center;
    gap: 2px;
    align-self: flex-start;
    width: 117px;
    height: 29px;
    margin-left: 14px;
    padding-left: 7px;
    border-radius: 0 0 4px 4px;
    background: #1a1a1a;
    color: #fff;
    font: 500 20px/1 "Roboto", sans-serif;
    letter-spacing: -0.6px;
}
.rec-dot {
    width: 12px;
    height: 12px;
    border-radius: 50%;
    background: #f51a1a;
    border: 2px solid #8d1414;
}

/* toolbar */
.toolbar {
    display: flex;
    align-items: center;
    flex: none;
    background: #fff;
}
.win-a .toolbar {
    height: 40px;
    padding: 6px 0 0 14px;
    gap: 20px;
}
.win-b .toolbar {
    height: 55px;
    padding: 3px 0 0 19px;
    gap: 29px;
}
.nav-ic {
    width: 16px;
    height: 16px;
    color: #5f6368;
}
.nav-ic.off {
    color: #bbb;
}
.omni {
    display: flex;
    align-items: center;
    flex: none;
    border-radius: 21px;
    background: #edf2fa;
    color: #1f1f1f;
}
.win-a .omni {
    width: 1588px;
    height: 34px;
    margin-left: -9px;
    padding: 0 16px 0 5px;
    font-size: 13.3px;
}
.win-b .omni {
    width: 1393px;
    height: 42px;
    margin-left: -2px;
    border-radius: 21px 0 0 21px;
    font-size: 16.5px;
}
.site {
    display: flex;
    align-items: center;
    justify-content: center;
    flex: none;
    border-radius: 50%;
    background: #fff;
}
.win-a .site {
    width: 23px;
    height: 24px;
    margin-right: 9px;
}
.win-b .site {
    width: 35px;
    height: 42px;
    margin-right: 8px;
}
.site svg {
    width: 13px;
    height: 13px;
}
.url {
    flex: 1;
    white-space: nowrap;
}
.omni-ic {
    width: 16px;
    height: 16px;
}
.key {
    margin-right: 17px;
}
.ext-pill {
    display: flex;
    align-items: center;
    gap: 20px;
    width: 104px;
    height: 34px;
    margin-left: -9px;
    padding-left: 8px;
    border: 1px solid #c4c7c5;
    border-radius: 17px;
    background: #fff;
}
.ext-fi {
    width: 16px;
    height: 18px;
    flex: none;
    border-radius: 3px;
    background: #46a5e5;
    color: #fff;
    font-size: 11px;
    font-weight: 700;
    line-height: 18px;
    text-align: center;
}
.ext {
    width: 16px;
    height: 16px;
}
.bar-sep {
    width: 1px;
    height: 18px;
    margin-left: -9px;
    background: #c9d6ea;
}
.avatar {
    width: 20px;
    height: 20px;
    margin-left: -3px;
    border-radius: 50%;
    background: #0c5546;
    color: #fff;
    font-size: 12px;
    line-height: 20px;
    text-align: center;
}
.menu-dots {
    width: 16px;
    height: 16px;
    margin-left: -2px;
    color: #444;
}

/* bookmarks */
.bookmarks {
    display: flex;
    align-items: center;
    flex: none;
    overflow: hidden;
    white-space: nowrap;
    background: #fff;
    border-bottom: 3px solid #e1e4ea;
}
.win-a .bookmarks {
    height: 43px;
    padding: 0 0 3px 13px;
    gap: 18px;
    font-size: 11.5px;
}
.win-b .bookmarks {
    height: 46px;
    padding: 0 0 1px 17px;
    gap: 22px;
    font-size: 14.5px;
    border-bottom-width: 1px;
    border-bottom-color: #d0d3d8;
}
.bm {
    display: flex;
    align-items: center;
    flex: none;
    color: #3c4043;
}
.win-a .bm {
    gap: 6px;
}
.win-b .bm {
    gap: 9px;
}
.win-a .bm svg {
    width: 16px;
    height: 17px;
}
.win-b .bm svg {
    width: 18px;
    height: 20px;
}
.win-a .bm .grid {
    width: 13px;
    height: 14px;
}
.win-b .bm .grid {
    width: 16px;
    height: 17px;
}
.win-a .bm-apps {
    gap: 8px;
    margin-right: -1px;
}
.win-a .bm-tabs {
    width: 14px;
    height: 14px;
}
.win-b .bm-tabs {
    width: 19px;
    height: 19px;
    margin-left: -2px;
}
.bm-sep {
    width: 1px;
    height: 18px;
    margin: 0 -2px;
    background: #c9d6ea;
}
.win-a .bm-flow {
    margin-left: -4px;
}
.win-b .bm-flow {
    margin-left: -3px;
}
.sliver {
    width: 2px;
    height: 16px;
    margin-right: 8px;
    border-radius: 50%;
    background: #7fa9b5;
}
.w3 {
    display: flex;
    color: #04aa6d;
    font-weight: 700;
    line-height: 1;
    letter-spacing: -1px;
}
.w3 sup {
    font-size: 7px;
    margin-left: 1px;
    line-height: 1;
}

/* left page */
.split {
    display: flex;
    flex: 1;
    min-height: 0;
}
.preview {
    position: relative;
    width: 1460px;
    flex: none;
    overflow: hidden;
    border-left: 2px solid #d5dbe8;
    font-family: "Inter", sans-serif;
    background: #fff;
}
.preview-head {
    display: flex;
    align-items: center;
    justify-content: space-between;
    height: 64px;
    padding: 0 23px 0 17px;
    border-bottom: 2px solid #e5e8ec;
}
.preview-head h2 {
    font-size: 16px;
    font-weight: 600;
    color: #12143a;
}
.preview-x {
    width: 13px;
    height: 13px;
    color: #6b7280;
}
.preview-body {
    width: 1185px;
    margin-left: 133px;
}
.sec-a {
    display: flex;
    align-items: center;
    border-left: 2px solid #1272c9;
    background: #eef1f6;
    padding-left: 7px;
}
.sec-a h3 {
    font-size: 16.5px;
    font-weight: 600;
    color: #12143a;
}
.sec-first {
    height: 30px;
    align-items: flex-start;
}
.sec-photo {
    height: 38px;
    margin-top: 53px;
}
.sec-attended {
    height: 39px;
    margin-top: 54px;
}
.lbl {
    font-size: 14px;
    font-weight: 500;
    line-height: 17px;
    color: #111;
    margin-left: -1px;
}
.lbl i {
    color: #f33;
    font-style: normal;
}
.lbl-charge {
    margin-top: 22px;
}
.lbl-extra {
    margin-top: 22px;
}
.rd {
    display: block;
    width: 17px;
    height: 17px;
    border-radius: 50%;
    background: #dfe5ee;
    border: 1px solid #ccd4e0;
}
.rd-on {
    margin-top: 11px;
    background: #dde5ef;
    border: 3px solid #f3f6fa;
    box-shadow: 0 0 0 1px #ccd4e0;
}
.rd-next {
    margin-top: 12px;
}
.rd-q {
    margin-top: 11px;
}
.rd-q2 {
    margin-top: 10px;
}
.rd-alt {
    margin-top: 12px;
}
.opt {
    display: block;
    margin: 1px 0 0 6px;
    font-size: 14px;
    font-weight: 500;
    line-height: 17px;
    color: #111;
}
.q {
    position: relative;
}
.q-yes {
    padding-top: 23px;
}
.q-stem {
    padding-top: 23px;
}
.cover {
    position: absolute;
    border: 10px solid #f00;
    border-radius: 4px;
    background: #fff;
}
.cover-a {
    left: -14px;
    top: -2px;
    width: 887px;
    height: 30px;
}
.cover-b {
    left: -9px;
    top: -4px;
    width: 942px;
    height: 39px;
}
.rule-a {
    height: 0;
    width: 1171px;
    margin: 76px 0 0;
    border: 0;
    border-top: 2px solid #e5e7eb;
}
.bubble {
    position: absolute;
    right: -2px;
    top: 98px;
    padding: 2px 0 3px 2px;
    border-radius: 4px 0 0 4px;
    background: #fff;
    box-shadow: 0 0 3px rgba(0, 0, 0, .2);
}
.bubble svg {
    width: 28px;
    height: 28px;
}
.page-scroll {
    position: absolute;
    right: 0;
    top: 714px;
    width: 8px;
    height: 136px;
    border-radius: 4px;
    background: #dcdcdc;
}
.peek-btn {
    position: absolute;
    left: 1374px;
    top: 850px;
    width: 67px;
    height: 12px;
    border: 1px solid #cfd4da;
    border-radius: 5px;
}

/* devtools */
.devtools {
    flex: 1;
    display: flex;
    flex-direction: column;
    min-width: 0;
    border-left: 1px solid #d3e3fd;
    margin-left: 3px;
    font-size: 9px;
    color: #3c4043;
}
.dt-ic {
    width: 15px;
    height: 15px;
    color: #444;
}
.dt-ic.blue {
    color: #1a73e8;
}
.dt-sep {
    width: 1px;
    height: 14px;
    flex: none;
    background: #d3e3fd;
}
.dt-tabs {
    display: flex;
    align-items: center;
    height: 20px;
    padding: 0 7px 2px 6px;
    background: #edf2fa;
    white-space: nowrap;
}
.dt-tabs > .dt-ic + .dt-ic {
    margin-left: 7px;
}
.dt-tabs .dt-sep {
    margin: 0 9px 0 7px;
}
.dt-tab {
    margin-right: 17px;
    line-height: 18px;
}
.dt-on {
    align-self: stretch;
    height: 20px;
    margin: 0 0 0 -8px;
    padding: 0 8px;
    color: #0b57d0;
    border-bottom: 2px solid #0b57d0;
}
.dt-more {
    margin: 0 0 0 6px;
    font-size: 12px;
}
.warn {
    margin-left: auto;
    color: #e8710a;
    font-size: 9px;
}
.err {
    width: 7px;
    height: 6px;
    margin-left: 4px;
    background: #d93025;
}
.count {
    margin-left: 3px;
}
.ai {
    width: 16px;
    height: 16px;
    border-radius: 50%;
    background: #1a73e8;
    color: #fff;
    font-size: 11px;
    line-height: 16px;
    text-align: center;
}
.dt-tabs .dt-sep:not(:nth-child(3)) {
    margin: 0 7px;
}
.dt-tabs .gear {
    margin-left: 6px;
}
.dt-actions {
    height: 42px;
    padding: 0 0 0 6px;
    border-top: 1px solid #d3e3fd;
    border-bottom: 1px solid #d3e3fd;
}
.dt-line {
    display: flex;
    align-items: center;
    height: 20px;
    white-space: nowrap;
    padding-right: 7px;
}
.dt-line .dt-ic + .dt-ic {
    margin-left: 7px;
}
.dt-line .dt-sep {
    margin: 0 7px;
}
.dt-line .push {
    margin-left: auto;
}
.dl {
    margin-top: 2px;
}
.chk {
    display: flex;
    align-items: center;
    gap: 5px;
    white-space: nowrap;
}
.chk input {
    width: 10px;
    height: 10px;
    margin: 0;
    accent-color: #1a73e8;
}
.throttle {
    display: flex;
    align-items: center;
    justify-content: space-between;
    width: 89px;
    height: 19px;
    margin: 0 6px 0 5px;
    padding: 0 5px 0 7px;
    border: 1px solid #c4c7c5;
    border-radius: 3px;
    flex: none;
}
.throttle b, .more-f b {
    width: 0;
    height: 0;
    border-left: 3px solid transparent;
    border-right: 3px solid transparent;
    border-top: 4px solid #555;
}
.more-f b {
    display: inline-block;
    margin-left: 6px;
    border-left-width: 4px;
    border-right-width: 4px;
    border-top-width: 5px;
}
.dt-filter {
    height: 42px;
    border-bottom: 1px solid #d3e3fd;
    padding: 3px 0 0 4px;
}
.filter-line {
    display: flex;
    align-items: center;
    height: 17px;
    gap: 9px;
}
.filter-box {
    display: flex;
    align-items: center;
    gap: 5px;
    width: 309px;
    height: 16px;
    padding-left: 9px;
    border-radius: 8px;
    background: #edf2fa;
    color: #5f6368;
}
.filter-box svg {
    width: 8px;
    height: 8px;
    color: #666;
}
.more-f {
    margin-left: 5px;
    white-space: nowrap;
}
.chips {
    display: flex;
    align-items: center;
    gap: 3px;
    margin-top: 3px;
}
.chip-all {
    width: 20px;
    height: 16px;
    line-height: 15px;
    text-align: center;
    border-radius: 4px;
    background: #d3e3fd;
    color: #0b3c8c;
}
.chip-sep {
    width: 1px;
    height: 12px;
    background: #d3e3fd;
}
.chip {
    height: 16px;
    line-height: 14px;
    padding: 0 5px;
    border: 1px solid #c4c7c5;
    border-radius: 5px;
}
.dt-opts {
    display: grid;
    grid-template-columns: 228px 1fr;
    grid-auto-rows: 19px;
    align-items: center;
    height: 38px;
    padding-left: 5px;
    border-bottom: 1px solid #d3e3fd;
}
.overview {
    position: relative;
    height: 66px;
    flex: none;
    border-bottom: 1px solid #d3e3fd;
}
.ticks {
    display: grid;
    grid-template-columns: 55px repeat(7, 56px) 1fr;
    height: 65px;
    font-size: 7.6px;
    color: #5f6368;
}
.ticks span {
    border-right: 1px solid #d3e3fd;
    padding: 4px 2px 0 0;
    text-align: right;
    white-space: nowrap;
}
.dashes {
    position: absolute;
    left: 0;
    top: 0;
    width: 456px;
    height: 66px;
}
.net {
    display: flex;
    flex: 1;
    min-height: 0;
}
.net-main {
    width: 441px;
    flex: none;
    display: flex;
    flex-direction: column;
    min-height: 0;
}
.net-row {
    display: grid;
    grid-template-columns: 203px 27px 71px 61px 53px 26px;
    align-items: center;
    height: 16.78px;
    white-space: nowrap;
    overflow: hidden;
}
.net-row:nth-child(odd) {
    background: #f7f9fe;
}
.net-row > span {
    display: flex;
    align-items: center;
    height: 100%;
    padding-left: 4px;
    overflow: hidden;
    border-right: 1px solid #d3e3fd;
    color: #303134;
}
.net-row > span:last-child {
    border-right: 0;
    padding-right: 0;
}
.net-row svg {
    width: 12px;
    height: 12px;
    margin-right: 3px;
}
.net-row .pf {
    width: 11px;
    height: 11px;
    margin: 0 0 0 1px;
}
.net-row u {
    color: #1f1f1f;
}
.net-row > .num {
    justify-content: flex-end;
    padding-right: 3px;
}
.net-row > .dim {
    color: #80868b;
}
.net-head {
    height: 22px;
    flex: none;
    border-bottom: 1px solid #d3e3fd;
    background: #edf2fa;
}
.net-body {
    flex: 1;
    min-height: 0;
    overflow: hidden;
}
.net-cut {
    height: 5px;
    align-items: end;
}
.net-cut > span {
    align-items: flex-end;
}
.net-cut u {
    display: block;
}
.net-scroll {
    flex: 1;
    display: flex;
    flex-direction: column;
    align-items: center;
    padding-right: 2px;
    background: #fff;
}
.sort-up {
    width: 0;
    height: 0;
    margin-top: 5px;
    border-left: 4px solid transparent;
    border-right: 4px solid transparent;
    border-bottom: 6px solid #9a9a9a;
}
.net-thumb {
    width: 9px;
    flex: 1;
    margin-top: 142px;
    border-radius: 4px 4px 0 0;
    background: #8f8f8f;
}

/* right page */
.lms {
    position: relative;
    display: flex;
    flex: 1;
    min-height: 0;
    font-family: "Inter", sans-serif;
}
.behind {
    width: 162px;
    flex: none;
    overflow: hidden;
    background: #9b9b9b;
    white-space: nowrap;
    font-size: 14px;
    color: #4b4b4b;
}
.lms-nav {
    display: flex;
    align-items: center;
    height: 51px;
    padding-left: 8px;
    background: #25598a;
}
.logo {
    display: flex;
    align-items: center;
    justify-content: center;
    gap: 1px;
    width: 85px;
    height: 33px;
    flex: none;
    background: #a3a3a3;
}
.logo span {
    width: 19px;
    height: 25px;
    text-align: center;
    line-height: 25px;
    font-size: 15px;
    font-weight: 700;
    color: #1b4f74;
    background: #3c8fb5;
    border: 1px solid #a58a4a;
}
.nav-link {
    margin-left: 41px;
    color: #8ba6c0;
}
.page-rule {
    height: 2px;
    margin-top: 51px;
    background: #6d6d6d;
}
.add-btn {
    width: 200px;
    height: 32px;
    margin: 11px 0 0 36px;
    padding-left: 6px;
    border-radius: 4px;
    background: #2a5d8e;
    color: #a8bed2;
    line-height: 32px;
}
.note {
    margin: 37px 0 0 35px;
    line-height: 18px;
}
.tbl {
    margin: 57px 0 0 35px;
    width: 200px;
}
.tbl-head {
    display: flex;
    align-items: center;
    height: 37px;
    padding-left: 8px;
    background: #8e9096;
    color: #40434f;
}
.tbl-head i {
    width: 0;
    height: 0;
    margin: 0 15px 0 60px;
    border-left: 4px solid transparent;
    border-right: 4px solid transparent;
    border-bottom: 7px solid #5a5f95;
}
.tbl-row {
    display: flex;
    height: 48px;
    padding: 10px 0 0 9px;
    border-bottom: 1px solid #8a8a8a;
    font-size: 14px;
}
.tbl-row span {
    width: 85px;
    padding-top: 5px;
    flex: none;
}
.tbl-row em {
    font-style: normal;
}
.tbl-row u {
    color: #3b6a92;
}
.pager {
    display: flex;
    align-items: center;
    margin: 29px 0 0 35px;
    height: 30px;
}
.pager b {
    width: 27px;
    height: 30px;
    margin: 0 5px;
    line-height: 28px;
    text-align: center;
    background: #8e8e8e;
    color: #777;
    font-weight: 400;
}
.pager strong {
    width: 44px;
    height: 30px;
    line-height: 28px;
    text-align: center;
    font-weight: 400;
    border: 1px solid #6f6f6f;
}
.close-circle {
    position: absolute;
    left: 16px;
    top: 87px;
    z-index: 3;
    display: flex;
    align-items: center;
    justify-content: center;
    width: 50px;
    height: 50px;
    border-radius: 50%;
    background: #fff;
    color: #1272c9;
}
.close-circle svg {
    width: 24px;
    height: 24px;
}
.form-modal {
    position: relative;
    z-index: 2;
    flex: 1;
    display: flex;
    flex-direction: column;
    min-width: 0;
    overflow: hidden;
    background: #fff;
    border-top: 1px solid #31383f;
    box-shadow: -5px 0 9px rgba(0, 0, 0, .45);
    clip-path: inset(0 0 0 -14px);
}
.form-head {
    position: relative;
    z-index: 2;
    flex: none;
    height: 49px;
    padding-left: 653px;
    background: #1272c9;
    color: #fff;
    font-size: 17.5px;
    font-weight: 500;
    line-height: 53px;
}
.form-body {
    padding-left: 15px;
    font-size: 13px;
    color: #3d3d3d;
}
.form-top {
    display: flex;
    height: 96px;
}
.text-area {
    width: 657px;
    height: 16px;
    margin-left: 15px;
    border: 1px solid #c4c9d0;
    border-top: 0;
    border-radius: 0 0 3px 3px;
}
.radios {
    margin: -16px 0 0 61px;
}
.opt-b {
    display: flex;
    align-items: center;
    gap: 4px;
    height: 29px;
    margin-left: 15px;
    line-height: 17px;
    color: #4a4a4a;
}
.radios .opt-b {
    margin-left: 0;
    height: 28.5px;
}
.opt-b input {
    width: 13px;
    height: 13px;
    margin: 0;
    accent-color: #0b6fd6;
}
.sec-b {
    display: flex;
    align-items: center;
    border-left: 2px solid #1272c9;
    background: #eef1f6;
    padding-left: 8px;
}
.sec-b h3 {
    font-size: 16.5px;
    font-weight: 600;
    color: #1272c9;
}
.sec-b mark {
    background: #c8c8c8;
    color: #333;
    padding: 2px 0;
}
.sec-user {
    height: 33px;
}
.sec-pay {
    height: 34px;
    margin-top: 32px;
}
.q-b {
    margin-left: 15px;
    font-size: 14.2px;
    font-weight: 500;
    line-height: 17px;
    color: #333;
    white-space: nowrap;
}
.q-b i {
    color: #f33;
    font-style: normal;
}
.q-charge {
    margin-top: 31px;
}
.opt-gap {
    margin-top: 6px;
}
.sec-ph {
    height: 34px;
    margin-top: 25px;
}
.q-wrap {
    position: relative;
}
.q-give {
    padding-top: 31px;
    padding-bottom: 6px;
}
.q-has {
    padding-top: 31px;
    padding-bottom: 6px;
}
.ring {
    position: absolute;
    border: 10px solid #f00;
    border-radius: 4px;
}
.ring-a {
    left: -5px;
    top: 11px;
    width: 1232px;
    height: 43px;
}
.ring-b {
    left: 1px;
    top: 10px;
    width: 455px;
    height: 55px;
}
.sec-att {
    height: 33px;
    margin-top: 25px;
}
.extra {
    margin: 22px 0 0 6px;
    line-height: 17px;
}
.rule-b {
    height: 0;
    margin: 22px 0 0;
    border: 0;
    border-top: 2px solid #c5cad1;
}
.form-foot {
    flex: 1;
    margin-top: 35px;
    padding: 10px 0 0 1352px;
    border-top: 2px solid #c5cad1;
}
.close-btn {
    display: block;
    width: 70px;
    height: 40px;
    padding: 8px 0 0 11px;
    border: 1px solid #5f6b76;
    border-radius: 4px;
    font-size: 14px;
    color: #555;
}
```
